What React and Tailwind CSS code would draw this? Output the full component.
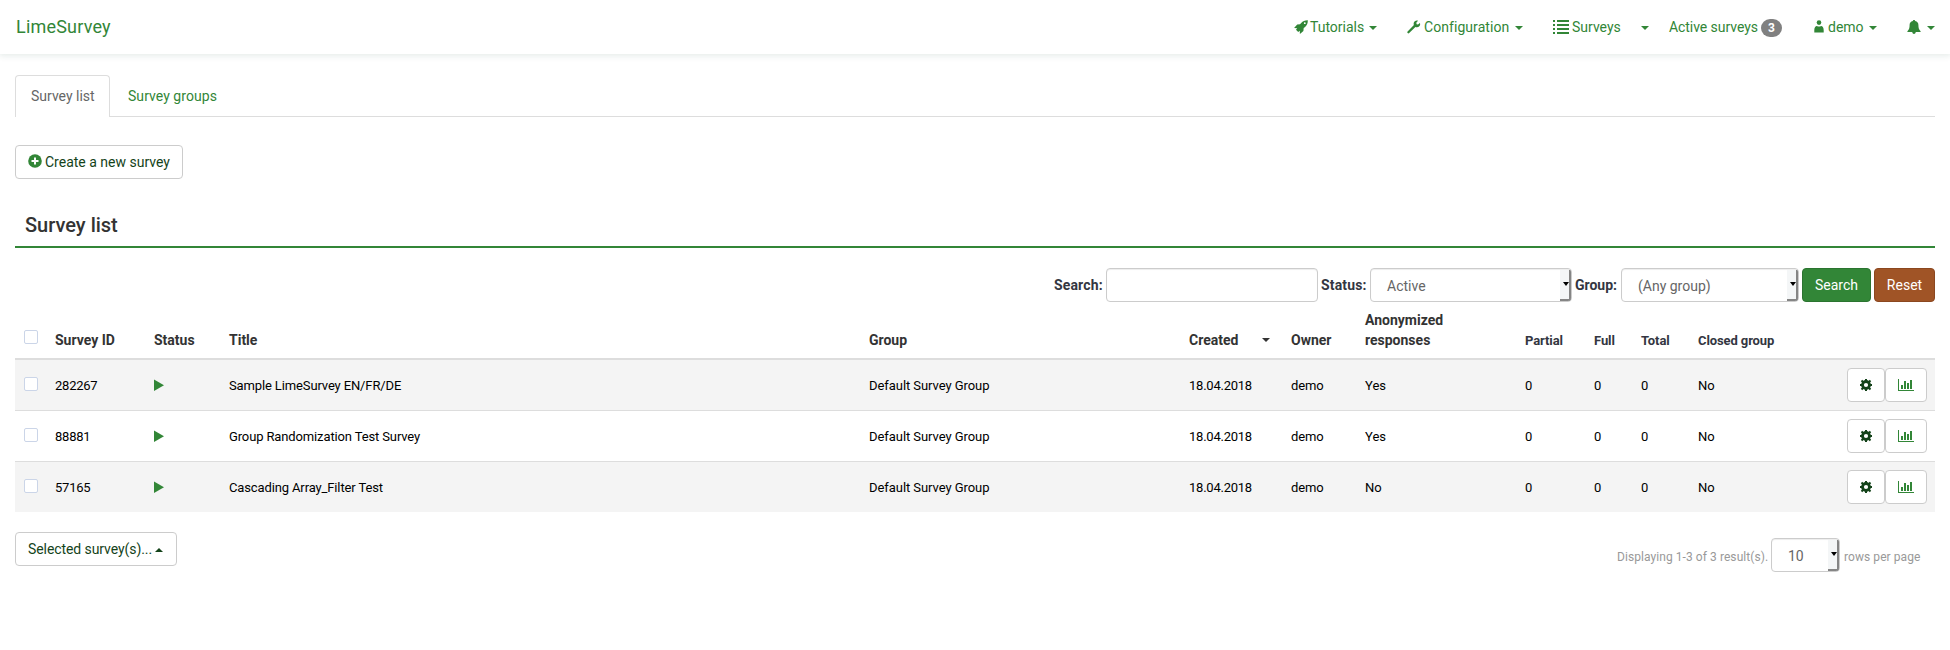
import React from "react";

const Caret = ({ up = false, className = "" }) => (
  <span
    className={`inline-block h-0 w-0 border-x-4 border-x-transparent ${up ? "border-b-4 border-b-current" : "border-t-4 border-t-current"} ${className}`}
  />
);

const Rocket = () => (
  <svg width="14" height="14" viewBox="0 0 14 14" fill="currentColor" fillRule="evenodd">
    <path d="M13.8 .2C11 .1 8.900 1 7.200 2.900L6 4.300L3.200 4.500L.1 8.100L3.200 8.200L2 9.800L4.200 12L5.800 10.800L5.900 13.900L9.400 10.900L9.700 8.100L11.100 6.900C13.100 5 13.900 3 13.800 .2ZM10.800 2.300A.9 .9 0 1 1 10.800 4.100A.9 .9 0 1 1 10.800 2.300Z" />
  </svg>
);
const Wrench = () => (
  <svg width="14" height="14" viewBox="0 0 14 14" fill="currentColor">
    <path d="M12.900 2.900L11 4.500L9.600 4.200L9.300 2.700L11 .7C9 .1 7.100 1.100 6.700 2.900C6.500 3.800 6.700 4.500 6.900 5.100L.6 11.500C.1 12.100 .3 12.700 .7 13.100C1.100 13.500 1.700 13.500 2.200 13L8.400 6.900C10 7.400 11.300 7.200 12.300 6.200C13.200 5.300 13.400 4.100 12.900 2.900Z" />
  </svg>
);
const List = () => (
  <svg width="16" height="14" viewBox="0 0 16 14" fill="currentColor" shapeRendering="crispEdges">
    <path d="M0 0h2v2H0zM0 4h2v2H0zM0 8h2v2H0zM0 12h2v2H0zM4 0h12v2H4zM4 4h12v2H4zM4 8h12v2H4zM4 12h12v2H4z" />
  </svg>
);
const User = () => (
  <svg width="10" height="14" viewBox="0 0 10 14" fill="currentColor">
    <circle cx="5" cy="2.600" r="2.300" />
    <path d="M.3 12.500V10.200C.3 7.500 1.300 6.200 3 6C4 6.800 6 6.800 7 6C8.700 6.200 9.700 7.500 9.700 10.200V12.500Z" />
  </svg>
);
const Bell = () => (
  <svg width="14" height="14" viewBox="0 0 14 14" fill="currentColor">
    <path d="M7 0C6.300 0 5.900 .4 5.900 1C3.600 1.400 2.600 3 2.600 5C2.600 8 2 9.800 .4 11.200V12H5.200C5.400 13.300 6.100 14 7 14S8.600 13.300 8.800 12H13.600V11.200C12 9.800 11.400 8 11.400 5C11.400 3 10.400 1.400 8.100 1C8.100 .4 7.700 0 7 0Z" />
  </svg>
);
const Plus = () => (
  <svg width="14" height="14" viewBox="0 0 14 14">
    <circle cx="7" cy="7" r="6.800" fill="#328637" />
    <path d="M6 3.500h2v2.500h2.500v2H8v2.500H6V8H3.500V6H6z" fill="#fff" />
  </svg>
);
const Cog = () => (
  <svg width="12" height="12" viewBox="0 0 12 12" className="text-[#14431a]">
    <circle cx="6" cy="6" r="3.500" fill="none" stroke="currentColor" strokeWidth="2.800" />
    <path d="M5 0h2v2H5zM5 10h2v2H5zM0 5h2v2H0zM10 5h2v2h-2z" fill="currentColor" />
    <path d="M1.500 1.500L3 3M9 9L10.500 10.500M10.500 1.500L9 3M3 9L1.500 10.500" stroke="currentColor" strokeWidth="2" />
  </svg>
);
const Chart = () => (
  <svg width="16" height="12" viewBox="0 0 16 12" fill="#328637" shapeRendering="crispEdges">
    <path d="M0 0h1v11h15v1H0zM3 6h2v4H3zM6 2h2v8H6zM9 4h2v6H9zM12 1h2v9h-2z" />
  </svg>
);

const Select = ({ children, className }) => (
  <div
    className={`flex h-[34px] shrink-0 items-stretch overflow-hidden rounded border border-[#ccc] bg-white shadow-[inset_0_1px_1px_rgba(0,0,0,0.075)] ${className}`}
  >
    <span className="flex-1 pt-[7px] pl-4 leading-5 font-normal text-[#666]">{children}</span>
    <span className="mt-px flex w-[11px] items-center justify-end border-r-2 border-b-2 border-[#858585] bg-[#f4f6f7] pb-px text-black">
      <Caret className="border-x-[3px]" />
    </span>
  </div>
);

const Check = () => <span className="block h-3.5 w-3.5 rounded-[2px] border border-[#cbd5e8] bg-white" />;

const grid =
  "grid grid-cols-[40px_99px_75px_640px_320px_102px_74px_160px_69px_47px_57px_149px_88px]";

const rows = [
  ["282267", "Sample LimeSurvey EN/FR/DE", "Yes"],
  ["88881", "Group Randomization Test Survey", "Yes"],
  ["57165", "Cascading Array_Filter Test", "No"],
];

export default function App() {
  return (
    <div className="h-[650px] w-[1950px] overflow-hidden bg-white font-['Roboto',sans-serif] text-sm leading-5 text-black">
      <nav className="flex h-[54px] items-center bg-white pl-4 text-[#328637] shadow-[0_1px_6px_1px_rgba(50,100,80,0.12)]">
        <span className="flex-1 text-lg leading-5 tracking-[0.2px]">LimeSurvey</span>
        <div className="flex w-[113px] items-center">
          <Rocket />
          <span className="ml-[2px]">Tutorials</span>
          <Caret className="mt-[2px] ml-[5px]" />
        </div>
        <div className="flex w-[146px] items-center">
          <Wrench />
          <span className="ml-[3px] tracking-[0.06px]">Configuration</span>
          <Caret className="mt-[2px] ml-[6px]" />
        </div>
        <div className="flex w-[116px] items-center">
          <List />
          <span className="ml-[3px]">Surveys</span>
          <Caret className="mt-[2px] ml-[20px]" />
        </div>
        <div className="flex w-[145px] items-center">
          <span className="tracking-[-0.06px]">Active surveys</span>
          <span className="mt-[2px] ml-[3px] h-[18px] w-[21px] rounded-[10px] bg-[#808080] text-center text-xs leading-[18px] font-bold text-white">
            3
          </span>
        </div>
        <div className="flex w-[93px] items-center">
          <User />
          <span className="ml-[4px]">demo</span>
          <Caret className="mt-[2px] ml-[5px]" />
        </div>
        <div className="flex w-[43px] items-center">
          <Bell />
          <Caret className="mt-[2px] ml-[6px]" />
        </div>
      </nav>

      <main className="px-[15px] pt-[21px]">
        <div className="flex h-[42px] border-b border-[#ddd]">
          <div className="h-[42px] w-[95px] rounded-t border border-b-0 border-[#ddd] bg-white pt-[10px] pl-[15px] text-[#666]">
            Survey list
          </div>
          <div className="pt-[11px] pl-[18px] tracking-[0.05px] text-[#328637]">Survey groups</div>
        </div>

        <button className="mt-7 flex h-[34px] w-[168px] items-center rounded border border-[#ccc] bg-white pl-3 text-[#14431a]">
          <span className="-mt-[2px]"><Plus /></span>
          <span className="ml-[3px]">Create a new survey</span>
        </button>

        <h3 className="mt-[35px] h-[34px] border-b-2 border-[#328637] pl-[10px] text-[20px] leading-[22px] font-medium text-[#333]">
          Survey list
        </h3>

        <div className="mt-5 flex h-[34px] items-center justify-end font-bold text-[#333641]">
          <span className="w-[49px] tracking-[0.15px]">Search:</span>
          <div className="ml-[3px] h-[34px] w-[212px] rounded border border-[#ccc] bg-white shadow-[inset_0_1px_1px_rgba(0,0,0,0.075)]" />
          <span className="ml-[3px] w-[49px] tracking-[0.15px]">Status:</span>
          <Select className="w-[202px]">Active</Select>
          <span className="ml-[3px] w-[46px]">Group:</span>
          <Select className="w-[178px]">(Any group)</Select>
          <button className="ml-[3px] h-[34px] w-[69px] rounded border border-[#2b7430] bg-[#328637] font-normal text-white">
            Search
          </button>
          <button className="ml-[3px] h-[34px] w-[61px] rounded border border-[#8b4720] bg-[#a05426] font-normal text-white">
            Reset
          </button>
        </div>

        <div className={`${grid} h-[58px] items-end border-b-2 border-[#ddd] pb-2 font-bold text-[#333]`}>
          <span className="mb-[6px] pl-[9px]"><Check /></span>
          <span>Survey ID</span>
          <span>Status</span>
          <span>Title</span>
          <span>Group</span>
          <span className="flex items-center justify-between pr-[21px]">Created <Caret /></span>
          <span>Owner</span>
          <span>Anonymized<br />responses</span>
          <span className="text-[13px] leading-[19px] tracking-[-0.1px] text-[#333641]">Partial</span>
          <span className="text-[13px] leading-[19px] tracking-[-0.1px] text-[#333641]">Full</span>
          <span className="text-[13px] leading-[19px] tracking-[-0.1px] text-[#333641]">Total</span>
          <span className="text-[13px] leading-[19px] tracking-[-0.1px] text-[#333641]">Closed group</span>
          <span />
        </div>
        {rows.map(([id, title, anon], i) => (
          <div
            key={id}
            className={`${grid} items-center text-[13px] ${i < 2 ? "h-[51px] border-b border-[#ddd]" : "h-[50px]"} ${i === 1 ? "bg-white" : "bg-[#f4f4f4]"}`}
          >
            <span className="-mt-[2px] pl-[9px]"><Check /></span>
            <span className="pt-px tracking-[-0.24px]">{id}</span>
            <span>
              <svg width="10" height="12" viewBox="0 0 10 12" fill="#328637"><path d="M0 .4L10 6.200L0 12Z" /></svg>
            </span>
            <span className="pt-px tracking-[-0.13px]">{title}</span>
            <span className="pt-px tracking-[-0.06px]">Default Survey Group</span>
            <span className="pt-px tracking-[-0.24px]">18.04.2018</span>
            <span className="pt-px tracking-[-0.1px]">demo</span>
            <span className="pt-px">{anon}</span>
            <span className="pt-px">0</span>
            <span className="pt-px">0</span>
            <span className="pt-px">0</span>
            <span className="pt-px">No</span>
            <span className="flex">
              <button className="flex h-[34px] w-[38px] items-center justify-center rounded border border-[#ccc] bg-white"><Cog /></button>
              <button className="flex h-[34px] w-[42px] items-center justify-center rounded border border-[#ccc] bg-white"><Chart /></button>
            </span>
          </div>
        ))}

        <div className="flex items-start justify-between pt-5">
          <button className="flex h-[34px] w-[162px] items-center rounded border border-[#ccc] bg-white pl-3 text-[#14431a]">
            <span className="tracking-[-0.08px]">Selected survey(s)...</span>
            <Caret up className="mt-[2px] ml-[3px]" />
          </button>
          <div className="mt-[6px] flex items-center pr-[15px] text-xs text-[#999]">
            <span className="mt-1 w-[154px] tracking-[0.07px] whitespace-nowrap">Displaying 1-3 of 3 result(s).</span>
            <Select className="w-[69px] text-sm">10</Select>
            <span className="mt-1 ml-1 w-[76px] tracking-[0.07px] whitespace-nowrap">rows per page</span>
          </div>
        </div>
      </main>
    </div>
  );
}
